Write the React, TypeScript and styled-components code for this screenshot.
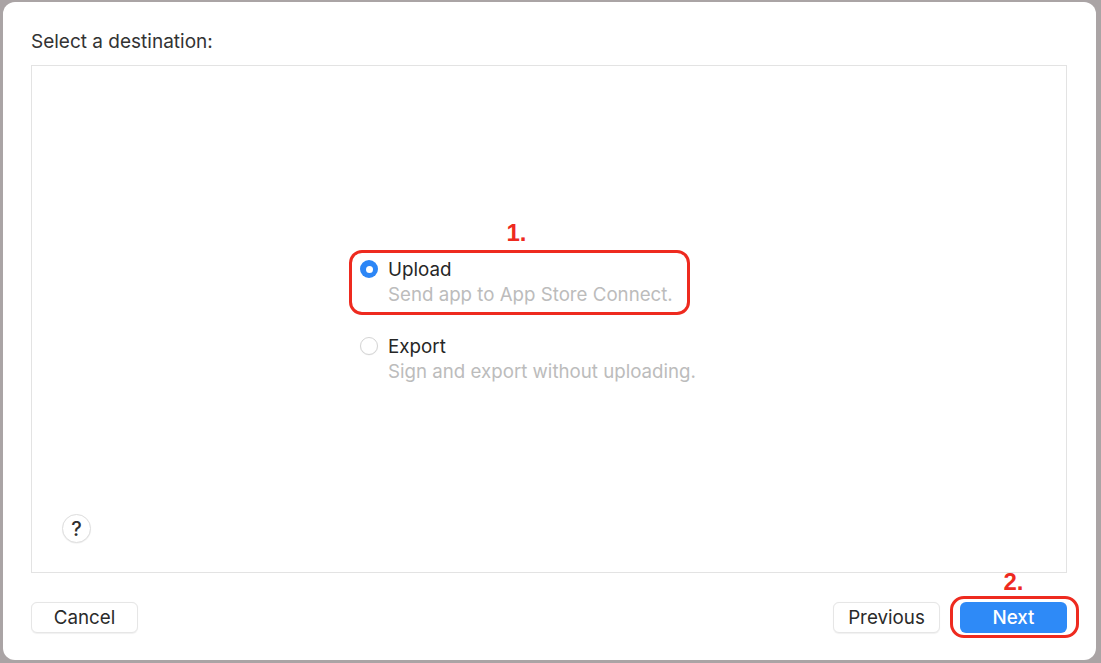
import React from "react";
import styled, { createGlobalStyle } from "styled-components";

const Global = createGlobalStyle`
  html, body { margin: 0; padding: 0; }
  body {
    background: #aaa4a5;
    font-family: Inter, "Liberation Sans", Arial, sans-serif;
    width: 1101px;
    height: 663px;
    overflow: hidden;
  }
  #root { padding: 2px 5px 3px 3px; }
`;

const Dialog = styled.div`
  width: 1093px;
  height: 658px;
  box-sizing: border-box;
  background: #ffffff;
  border-radius: 12px;
  padding: 29px 29px 0 28px;
  display: flex;
  flex-direction: column;
`;

const Title = styled.div`
  font-size: 19px;
  line-height: 22px;
  color: #333333;
  margin-bottom: 12px;
`;

const Box = styled.div`
  height: 508px;
  box-sizing: border-box;
  border: 1px solid #e3e3e3;
  display: grid;
  grid-template: 1fr / 1fr;
`;

const Options = styled.div`
  grid-area: 1 / 1;
  display: flex;
  align-items: center;
  justify-content: center;
  padding-right: 42px;
  padding-top: 2px;
`;

const OptionList = styled.div`
  display: flex;
  flex-direction: column;
  gap: 27px;
`;

const Option = styled.div`
  position: relative;
  display: flex;
  align-items: flex-start;
  gap: 10px;
  align-self: flex-start;
`;

const Radio = styled.span<{ $on?: boolean }>`
  width: 18px;
  height: 18px;
  box-sizing: border-box;
  border-radius: 50%;
  margin-top: 3.5px;
  flex: none;
  display: flex;
  align-items: center;
  justify-content: center;
  background: ${(p) => (p.$on ? "#2c86f6" : "#ffffff")};
  border: ${(p) => (p.$on ? "none" : "1px solid #d4d4d4")};
  box-shadow: ${(p) => (p.$on ? "none" : "0 0.5px 1px rgba(0,0,0,0.06)")};
  &::after {
    content: "";
    display: ${(p) => (p.$on ? "block" : "none")};
    width: 7px;
    height: 7px;
    border-radius: 50%;
    background: #ffffff;
  }
`;

const Texts = styled.div`
  display: flex;
  flex-direction: column;
`;

const Label = styled.div`
  font-size: 18.8px;
  line-height: 25px;
  color: #262626;
`;

const Sub = styled.div`
  font-size: 18.7px;
  line-height: 25px;
  color: #bcbcbc;
  white-space: nowrap;
`;

const Highlight = styled.div`
  position: absolute;
  top: -7px;
  left: -11px;
  right: -17px;
  bottom: -8px;
  border: 3px solid #ee2a1f;
  border-radius: 13px;
  pointer-events: none;
`;

const Mark = styled.div<{ $top: number }>`
  position: absolute;
  left: 0;
  right: 0;
  top: ${(p) => p.$top}px;
  text-align: center;
  font-size: 24px;
  line-height: 24px;
  font-weight: 700;
  color: #ee2a1f;
  font-family: "Liberation Sans", Arial, sans-serif;
`;

const HelpButton = styled.button`
  grid-area: 1 / 1;
  align-self: end;
  justify-self: start;
  margin: 0 0 29px 30px;
  width: 29px;
  height: 29px;
  padding: 0;
  border-radius: 50%;
  border: 1px solid #dedede;
  background: #ffffff;
  box-shadow: 0 0.5px 1px rgba(0, 0, 0, 0.08);
  color: #2e2e2e;
  font-family: inherit;
  font-size: 20px;
  font-weight: 500;
  display: flex;
  align-items: center;
  justify-content: center;
`;

const Footer = styled.div`
  margin-top: 29px;
  display: flex;
  justify-content: space-between;
  align-items: center;
`;

const Group = styled.div`
  display: flex;
  gap: 20px;
`;

const Button = styled.button<{ $primary?: boolean }>`
  width: 107px;
  height: 31px;
  box-sizing: border-box;
  border-radius: 6px;
  font-family: inherit;
  font-size: 18.8px;
  font-weight: ${(p) => (p.$primary ? 500 : 400)};
  padding: 0;
  border: ${(p) => (p.$primary ? "none" : "1px solid #e6e6e6")};
  background: ${(p) => (p.$primary ? "#2e8af7" : "#ffffff")};
  color: ${(p) => (p.$primary ? "#ffffff" : "#2a2a2a")};
  box-shadow: ${(p) => (p.$primary ? "none" : "0 0.5px 1px rgba(0,0,0,0.06)")};
`;

const Anchor = styled.div`
  position: relative;
`;

const ButtonRing = styled.div`
  position: absolute;
  top: -6px;
  left: -10px;
  right: -12px;
  bottom: -5px;
  border: 3px solid #ee2a1f;
  border-radius: 14px;
  pointer-events: none;
`;

export default function App() {
  return (
    <>
      <Global />
      <Dialog>
        <Title>Select a destination:</Title>
        <Box>
          <Options>
            <OptionList>
              <Option>
                <Mark $top={-36}>1.</Mark>
                <Radio $on />
                <Texts>
                  <Label>Upload</Label>
                  <Sub>Send app to App Store Connect.</Sub>
                </Texts>
                <Highlight />
              </Option>
              <Option>
                <Radio />
                <Texts>
                  <Label>Export</Label>
                  <Sub>Sign and export without uploading.</Sub>
                </Texts>
              </Option>
            </OptionList>
          </Options>
          <HelpButton>?</HelpButton>
        </Box>
        <Footer>
          <Button>Cancel</Button>
          <Group>
            <Button>Previous</Button>
            <Anchor>
              <Mark $top={-32}>2.</Mark>
              <Button $primary>Next</Button>
              <ButtonRing />
            </Anchor>
          </Group>
        </Footer>
      </Dialog>
    </>
  );
}
